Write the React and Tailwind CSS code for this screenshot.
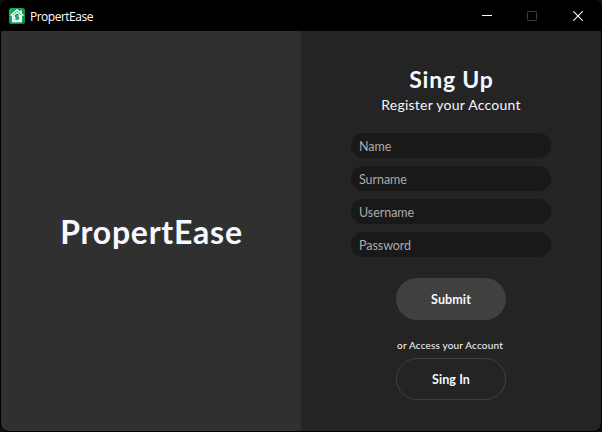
const fields = ["Name", "Surname", "Username", "Password"];

function HouseIcon() {
  return (
    <svg width="16" height="16" viewBox="0 0 16 16" className="shrink-0">
      <defs>
        <linearGradient id="tile" x1="0" y1="0" x2="1" y2="1">
          <stop offset="0" stopColor="#12b866" />
          <stop offset="1" stopColor="#078249" />
        </linearGradient>
      </defs>
      <rect width="16" height="16" rx="2.5" fill="url(#tile)" />
      <path d="M1.5 7.6 8 1.9l6.5 5.7" fill="none" stroke="#fff" strokeWidth="1.3" />
      <path d="M11.2 2.2h1.6v3.4l-1.6-1.3z" fill="#fff" />
      <path d="M3.6 7v6.6h8.8V7" fill="none" stroke="#fff" strokeWidth="1.4" />
      <path d="M4 7 8 3.5 12 7v6H4z" fill="#d9f5e6" />
      <path
        d="M9.8 6.9H7.5c-1.5 0-1.5 2 0 2h1c1.5 0 1.5 2.1 0 2.1H6.1M8 5.8v6.3"
        fill="none"
        stroke="#079653"
        strokeWidth="1.1"
      />
    </svg>
  );
}

function TitleBar() {
  return (
    <header className="flex h-[30px] shrink-0 items-center bg-black pl-2">
      <HouseIcon />
      <span className="ml-[5px] flex-1 pt-px font-['Open_Sans','Noto_Sans',sans-serif] text-xs leading-4 tracking-[-0.5px] text-white">
        PropertEase
      </span>
      <div className="flex w-[119px] items-center justify-between pr-[18px]">
        <svg width="10" height="10" viewBox="0 0 10 10" shapeRendering="crispEdges">
          <path d="M0 4h10v1H0z" fill="#fff" />
        </svg>
        <svg width="10" height="10" viewBox="0 0 10 10" className="mr-px">
          <rect x=".5" y=".5" width="9" height="9" rx=".5" fill="none" stroke="#3a3a3a" />
        </svg>
        <svg width="10" height="10" viewBox="0 0 10 10">
          <path d="m.3.3 9.4 9.4M9.7.3.3 9.7" stroke="#fff" strokeWidth="1.1" />
        </svg>
      </div>
    </header>
  );
}

export default function App() {
  return (
    <div className="h-[432px] w-[602px] bg-[#101010] font-['Lato','Noto_Sans',sans-serif]">
      <div className="flex h-full w-full flex-col overflow-hidden rounded-lg border border-black bg-black">
        <TitleBar />
        <main className="flex flex-1 overflow-hidden rounded-b-[7px]">
          <section className="flex w-[300px] items-center justify-center bg-[#303030]">
            <h1 className="pt-0.5 pl-px text-[32px] leading-10 font-bold tracking-[0.75px] whitespace-nowrap text-[#f5f8ff]">
              PropertEase
            </h1>
          </section>
          <section className="flex w-[300px] flex-col items-center bg-[#242424] pt-8 text-[#f5f8ff]">
            <h2 className="pl-px text-[23px] leading-8 font-bold tracking-[0.8px]">Sing Up</h2>
            <p className="text-sm leading-5 tracking-[0.25px]">Register your Account</p>
            <form className="mt-[18px] flex w-[200px] flex-col gap-2">
              {fields.map((name) => (
                <input
                  key={name}
                  placeholder={name}
                  className="h-[25px] rounded-full bg-[#191919] px-2 pt-0.5 text-[12.5px] tracking-[-0.05px] placeholder:text-[#aaaaaa]"
                />
              ))}
            </form>
            <button className="mt-[21px] h-[42px] w-[110px] shrink-0 rounded-full bg-[#404040] pt-0.5 text-[12.5px] font-bold tracking-[0.1px]">
              Submit
            </button>
            <p className="mt-[17px] pr-0.5 text-[10px] leading-4 tracking-[0.18px]">or Access your Account</p>
            <button className="mt-[5px] h-[42px] w-[110px] shrink-0 rounded-full border border-[#404040] pt-0.5 text-[12.5px] font-bold tracking-[0.1px]">
              Sing In
            </button>
          </section>
        </main>
      </div>
    </div>
  );
}
